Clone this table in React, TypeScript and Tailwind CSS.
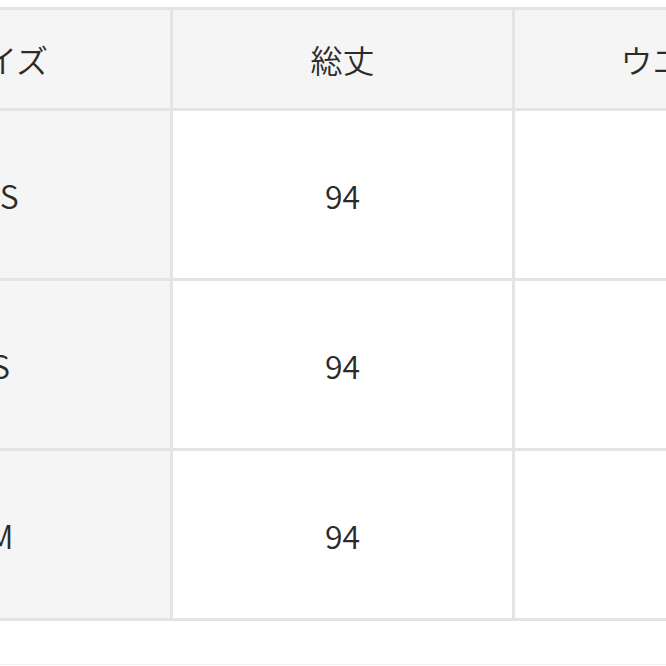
import React from "react";

type Row = {
  size: string;
  length: string;
  waist: string;
  hip: string;
};

const rows: Row[] = [
  { size: "XS", length: "94", waist: "64", hip: "88" },
  { size: "S", length: "94", waist: "66", hip: "90" },
  { size: "M", length: "94", waist: "68", hip: "92" },
];

const headers = ["サイズ", "総丈", "ウエスト", "ヒップ"];

function App() {
  return (
    <div
      className="w-[666px] h-[666px] overflow-hidden bg-white text-[#2b2b2b]"
      style={{ fontFamily: '"Noto Sans CJK JP", "Noto Sans", sans-serif' }}
    >
      <div className="pt-[7px] -ml-[172px]">
        {/* size table */}
        <div className="grid grid-cols-[339px_339px_339px_339px] w-max gap-[3px] p-[3px] bg-[#e4e4e4] text-[32px] leading-none font-[350]">
          {headers.map((h) => (
            <div key={h} className="h-[98px] flex items-center justify-center bg-[#f5f5f5]">
              {h}
            </div>
          ))}
          {rows.map((r) => (
            <React.Fragment key={r.size}>
              <div className="h-[167px] flex items-center justify-center bg-[#f5f5f5]">{r.size}</div>
              <div className="h-[167px] flex items-center justify-center bg-white">{r.length}</div>
              <div className="h-[167px] flex items-center justify-center bg-white">{r.waist}</div>
              <div className="h-[167px] flex items-center justify-center bg-white">{r.hip}</div>
            </React.Fragment>
          ))}
        </div>
        <div className="mt-[43px] h-px w-[1200px] bg-[#f2f2f2]" />
      </div>
    </div>
  );
}

export default App;
